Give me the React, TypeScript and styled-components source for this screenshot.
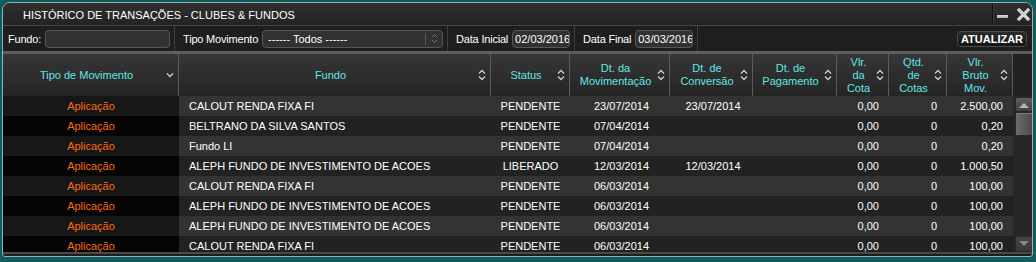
import React from "react";
import styled, { createGlobalStyle } from "styled-components";

const GlobalStyle = createGlobalStyle`
  html, body {
    margin: 0;
    padding: 0;
    background: #0e5c5c;
  }
  body {
    font-family: "Liberation Sans", Arial, sans-serif;
    font-size: 11px;
  }
  * {
    box-sizing: border-box;
  }
`;

const COLS = "176px 312px 79px 100px 83px 84px 52px 58px 66px";

interface Movimento {
  fundo: string;
  status: string;
  dtMov: string;
  dtConv: string;
  dtPag: string;
  vlrCota: string;
  qtd: string;
  bruto: string;
}

const rows: Movimento[] = [
  { fundo: "CALOUT RENDA FIXA FI", status: "PENDENTE", dtMov: "23/07/2014", dtConv: "23/07/2014", dtPag: "", vlrCota: "0,00", qtd: "0", bruto: "2.500,00" },
  { fundo: "BELTRANO DA SILVA SANTOS", status: "PENDENTE", dtMov: "07/04/2014", dtConv: "", dtPag: "", vlrCota: "0,00", qtd: "0", bruto: "0,20" },
  { fundo: "Fundo LI", status: "PENDENTE", dtMov: "07/04/2014", dtConv: "", dtPag: "", vlrCota: "0,00", qtd: "0", bruto: "0,20" },
  { fundo: "ALEPH FUNDO DE INVESTIMENTO DE ACOES", status: "LIBERADO", dtMov: "12/03/2014", dtConv: "12/03/2014", dtPag: "", vlrCota: "0,00", qtd: "0", bruto: "1.000,50" },
  { fundo: "CALOUT RENDA FIXA FI", status: "PENDENTE", dtMov: "06/03/2014", dtConv: "", dtPag: "", vlrCota: "0,00", qtd: "0", bruto: "100,00" },
  { fundo: "ALEPH FUNDO DE INVESTIMENTO DE ACOES", status: "PENDENTE", dtMov: "06/03/2014", dtConv: "", dtPag: "", vlrCota: "0,00", qtd: "0", bruto: "100,00" },
  { fundo: "ALEPH FUNDO DE INVESTIMENTO DE ACOES", status: "PENDENTE", dtMov: "06/03/2014", dtConv: "", dtPag: "", vlrCota: "0,00", qtd: "0", bruto: "100,00" },
  { fundo: "CALOUT RENDA FIXA FI", status: "PENDENTE", dtMov: "06/03/2014", dtConv: "", dtPag: "", vlrCota: "0,00", qtd: "0", bruto: "100,00" },
];

const headers: string[][] = [
  ["Tipo de Movimento"],
  ["Fundo"],
  ["Status"],
  ["Dt. da", "Movimentação"],
  ["Dt. de", "Conversão"],
  ["Dt. de", "Pagamento"],
  ["Vlr.", "da", "Cota"],
  ["Qtd.", "de", "Cotas"],
  ["Vlr.", "Bruto", "Mov."],
];

function SortArrows() {
  return (
    <SortIcon viewBox="0 0 8 12">
      <path d="M1 4.5 L4 1.5 L7 4.5 M1 7.5 L4 10.5 L7 7.5" fill="none" stroke="#cfcfcf" strokeWidth="1.3" />
    </SortIcon>
  );
}

function DownArrow() {
  return (
    <SortIcon viewBox="0 0 8 12">
      <path d="M1 4.5 L4 7.5 L7 4.5" fill="none" stroke="#cfcfcf" strokeWidth="1.3" />
    </SortIcon>
  );
}

export default function App() {
  return (
    <>
      <GlobalStyle />
      <Page>
        <Window>
          <TitleBar>
            <Title>HISTÓRICO DE TRANSAÇÕES - CLUBES &amp; FUNDOS</Title>
            <Controls>
              <Minimize />
              <svg width="13" height="13" viewBox="0 0 13 13">
                <path d="M2 2 L11 11 M11 2 L2 11" stroke="#d4d4d4" strokeWidth="3.2" strokeLinecap="square" />
              </svg>
            </Controls>
          </TitleBar>

          <FilterBar>
            <FilterGroup $first>
              <Label>Fundo:</Label>
              <TextBox $w={125} />
            </FilterGroup>
            <FilterGroup>
              <Label>Tipo Movimento</Label>
              <Select>
                <span>------ Todos ------</span>
                <SelectArrow>
                  <svg width="7" height="11" viewBox="0 0 7 11">
                    <path d="M1 4 L3.5 1.5 L6 4 M1 7 L3.5 9.5 L6 7" fill="none" stroke="#7a7a7a" strokeWidth="1" />
                  </svg>
                </SelectArrow>
              </Select>
            </FilterGroup>
            <FilterGroup>
              <Label>Data Inicial</Label>
              <TextBox $w={58}>02/03/2016</TextBox>
            </FilterGroup>
            <FilterGroup>
              <Label>Data Final</Label>
              <TextBox $w={58}>03/03/2016</TextBox>
            </FilterGroup>
            <Spacer />
            <Button>ATUALIZAR</Button>
          </FilterBar>

          <Grid>
            <HeaderRow>
              {headers.map((lines, i) => (
                <HeaderCell key={i}>
                  <HeaderLabel>
                    {lines.map((l, j) => (
                      <div key={j}>{l}</div>
                    ))}
                  </HeaderLabel>
                  {i === 0 ? <DownArrow /> : <SortArrows />}
                </HeaderCell>
              ))}
              <HeaderFiller />
            </HeaderRow>

            <Body>
              <Rows>
                {rows.map((r, i) => {
                  const odd = i % 2 === 0;
                  return (
                    <Row key={i} $odd={odd}>
                      <TipoCell $odd={odd}>Aplicação</TipoCell>
                      <Cell $align="left">{r.fundo}</Cell>
                      <Cell $align="center">{r.status}</Cell>
                      <Cell $align="center" $shift>{r.dtMov}</Cell>
                      <Cell $align="center" $shift>{r.dtConv}</Cell>
                      <Cell $align="center">{r.dtPag}</Cell>
                      <Cell $align="right">{r.vlrCota}</Cell>
                      <Cell $align="right">{r.qtd}</Cell>
                      <Cell $align="right">{r.bruto}</Cell>
                    </Row>
                  );
                })}
              </Rows>
              <Scrollbar>
                <ScrollButton>
                  <svg width="10" height="6" viewBox="0 0 10 6">
                    <path d="M0 6 L5 1 L10 6 Z" fill="#b8b8b8" />
                  </svg>
                </ScrollButton>
                <Thumb />
                <Track />
                <ScrollButton $down>
                  <svg width="10" height="6" viewBox="0 0 10 6">
                    <path d="M0 0 L5 5 L10 0 Z" fill="#8a8a8a" />
                  </svg>
                </ScrollButton>
              </Scrollbar>
            </Body>
          </Grid>
        </Window>
      </Page>
    </>
  );
}

const Page = styled.div`
  width: 1036px;
  height: 262px;
  padding: 2px 3px 0 2px;
  background: #0e5c5c;
`;

const Window = styled.div`
  height: 255px;
  border: 1px solid #a4abab;
  border-radius: 8px 8px 3px 3px;
  background: #1d1d1d;
  display: flex;
  flex-direction: column;
  overflow: hidden;
`;

const TitleBar = styled.div`
  height: 23px;
  flex: none;
  display: flex;
  align-items: stretch;
  background: linear-gradient(#303030, #232323);
  border-bottom: 1px dotted #5a5a5a;
`;

const Title = styled.div`
  flex: 1;
  display: flex;
  align-items: center;
  padding: 1px 0 0 20px;
  color: #ffffff;
  font-size: 11px;
`;

const Controls = styled.div`
  display: flex;
  align-items: center;
  gap: 9px;
  padding: 0 2px 0 4px;
  border-left: 1px solid #111;
  box-shadow: inset 1px 0 #3c3c3c;
`;

const Minimize = styled.div`
  width: 11px;
  height: 3px;
  margin-top: 5px;
  background: linear-gradient(#e0e0e0, #a8a8a8);
`;

const FilterBar = styled.div`
  height: 25px;
  flex: none;
  display: flex;
  align-items: stretch;
  background: #1e1e1e;
`;

const FilterGroup = styled.div<{ $first?: boolean }>`
  display: flex;
  align-items: center;
  gap: 4px;
  padding: 0 4px 0 ${(p) => (p.$first ? 5 : 8)}px;
  border-right: 1px solid #3e3e3e;
`;

const Label = styled.span`
  color: #ffffff;
  font-size: 11px;
  letter-spacing: -0.2px;
  white-space: nowrap;
`;

const TextBox = styled.div<{ $w: number }>`
  width: ${(p) => p.$w}px;
  height: 18px;
  display: flex;
  align-items: center;
  padding: 0 1px 0 2px;
  background: #313131;
  border: 1px solid #575757;
  border-radius: 4px;
  color: #ffffff;
  font-size: 11px;
  white-space: nowrap;
  overflow: hidden;
`;

const Select = styled.div`
  width: 181px;
  height: 18px;
  display: flex;
  align-items: center;
  justify-content: space-between;
  padding-left: 5px;
  background: #313131;
  border: 1px solid #575757;
  border-radius: 4px;
  color: #ffffff;
  font-size: 11px;
  white-space: nowrap;
`;

const SelectArrow = styled.div`
  width: 17px;
  height: 12px;
  display: flex;
  align-items: center;
  justify-content: center;
  border-left: 1px solid #5a5a5a;
`;

const Spacer = styled.div`
  flex: 1;
`;

const Button = styled.div`
  align-self: center;
  width: 70px;
  height: 16px;
  margin: 1px 5px 0 0;
  display: flex;
  align-items: center;
  justify-content: center;
  background: linear-gradient(#2c2c2c, #141414);
  border: 1px solid #4c4c4c;
  border-radius: 4px;
  color: #ffffff;
  font-weight: bold;
  font-size: 11px;
`;

const Grid = styled.div`
  flex: 1;
  min-height: 0;
  display: flex;
  flex-direction: column;
  border-top: 3px solid #5e5e5e;
  border-bottom: 2px solid #4a4a4a;
  margin-bottom: 2px;
`;

const HeaderRow = styled.div`
  height: 42px;
  flex: none;
  display: grid;
  grid-template-columns: ${COLS} 1fr;
`;

const HeaderCell = styled.div`
  display: flex;
  align-items: center;
  padding: 0 4px;
  background: linear-gradient(#363636, #252525);
  border-right: 1px solid #5c5c5c;
`;

const HeaderLabel = styled.div`
  flex: 1;
  text-align: center;
  color: #62e6e8;
  font-size: 11px;
  line-height: 13px;
`;

const SortIcon = styled.svg`
  flex: none;
  width: 8px;
  height: 12px;
`;

const HeaderFiller = styled.div`
  background: #222222;
`;

const Body = styled.div`
  flex: 1;
  min-height: 0;
  display: flex;
  overflow: hidden;
`;

const Rows = styled.div`
  width: 1010px;
  flex: none;
`;

const Row = styled.div<{ $odd: boolean }>`
  height: 20px;
  display: grid;
  grid-template-columns: ${COLS};
  background: ${(p) => (p.$odd ? "#333333" : "#222222")};
`;

const Cell = styled.div<{ $align: "left" | "center" | "right"; $shift?: boolean }>`
  display: flex;
  align-items: center;
  justify-content: ${(p) =>
    p.$align === "left" ? "flex-start" : p.$align === "right" ? "flex-end" : "center"};
  padding: 0 10px 0 ${(p) => (p.$shift ? 13 : 10)}px;
  color: #ffffff;
  font-size: 11px;
  white-space: nowrap;
  overflow: hidden;
`;

const TipoCell = styled.div<{ $odd: boolean }>`
  display: flex;
  align-items: center;
  justify-content: center;
  background: ${(p) => (p.$odd ? "#171717" : "#040404")};
  color: #ff6a10;
  font-size: 11px;
`;

const Scrollbar = styled.div`
  flex: 1;
  display: flex;
  flex-direction: column;
  gap: 2px;
  padding: 2px 0 1px 3px;
  background: #272727;
`;

const ScrollButton = styled.div<{ $down?: boolean }>`
  width: 16px;
  height: ${(p) => (p.$down ? 14 : 13)}px;
  flex: none;
  display: flex;
  align-items: center;
  justify-content: center;
  background: ${(p) =>
    p.$down ? "linear-gradient(#454545, #383838)" : "linear-gradient(#5e5e5e, #404040)"};
`;

const Thumb = styled.div`
  width: 16px;
  height: 22px;
  flex: none;
  background: linear-gradient(90deg, #6c6c6c, #4a4a4a);
  border-top: 1px solid #7a7a7a;
`;

const Track = styled.div`
  flex: 1;
`;
